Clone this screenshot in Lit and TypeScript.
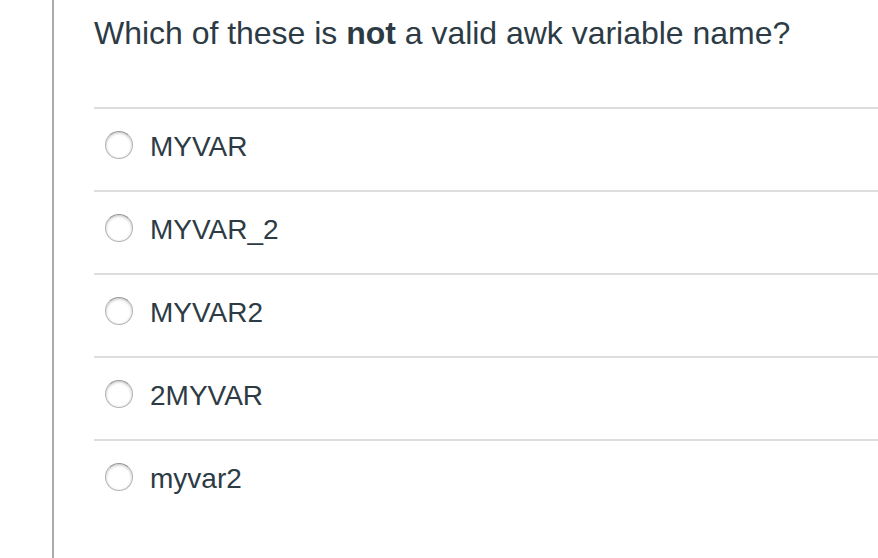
import {LitElement, css, html} from 'lit'
import {customElement, property, state} from 'lit/decorators.js'

@customElement('answer-option')
export class AnswerOption extends LitElement {

  static styles = css`
    :host {
      display: block;
      box-sizing: border-box;
      height: 83px;
      border-top: 2px solid #dddddd;
    }

    label {
      display: flex;
      align-items: flex-start;
      padding: 22px 0 0 11px;
    }

    input {
      appearance: none;
      flex: none;
      box-sizing: border-box;
      width: 28px;
      height: 28px;
      margin: 0 17px 0 0;
      border: 1px solid #b4b4b4;
      border-top-color: #989898;
      border-radius: 50%;
      background: #fff;
      box-shadow: inset 0 1px 3px rgba(0, 0, 0, 0.25);
    }

    input:checked {
      background: radial-gradient(circle, #2d3b45 6px, #fff 7px);
    }

    span {
      line-height: 32px;
    }
  `

  @property({ type: String }) label = ''
  @property({ type: Boolean }) checked = false

  render() {
    return html`
      <label>
        <input type="radio" .checked="${this.checked}" @change="${this._handleChange}"/>
        <span>${this.label}</span>
      </label>
    `
  }

  _handleChange() {
    this.dispatchEvent(new CustomEvent('on-select', { detail: { label: this.label } }))
  }

}

@customElement('app-root')
export class AppRoot extends LitElement {

  static styles = css`
    :host {
      display: flex;
      box-sizing: border-box;
      width: 100vw;
      height: 100vh;
      padding-left: 52px;
      overflow: hidden;
      background: #fff;
      color: #2d3b45;
      font-family: "Liberation Sans", Arial, sans-serif;
      font-size: 28px;
    }

    .question {
      flex: 1;
      padding-left: 40px;
      border-left: 2px solid #aaaaaa;
    }

    .question-text {
      height: 107px;
      box-sizing: border-box;
      padding-top: 13px;
      font-size: 32px;
      line-height: 40px;
      letter-spacing: -0.02px;
      white-space: nowrap;
    }
  `

  @state() selected = ''

  answers = ['MYVAR', 'MYVAR_2', 'MYVAR2', '2MYVAR', 'myvar2']

  render() {
    return html`
      <div class="question">
        <div class="question-text">
          Which of these is <strong>not</strong> a valid awk variable name?
        </div>
        ${this.answers.map(answer => html`
          <answer-option
            label="${answer}"
            .checked="${this.selected === answer}"
            @on-select="${this._handleSelect}">
          </answer-option>
        `)}
      </div>
    `
  }

  _handleSelect(event: any) {
    this.selected = event.detail.label
  }

}
